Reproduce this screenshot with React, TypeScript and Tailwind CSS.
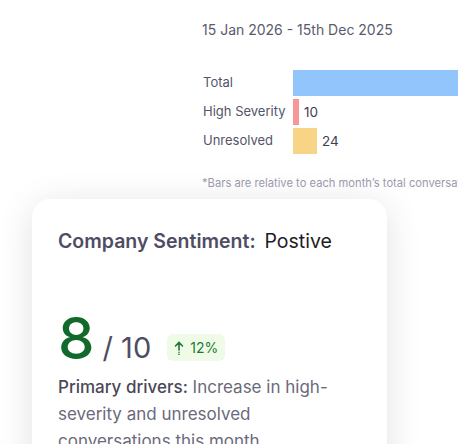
export default function App() {
  return (
    <div className="relative h-[444px] w-[458px] overflow-hidden bg-white font-['Inter',sans-serif]">
      <section className="pl-[202px] pt-[20px]">
        <p className="text-[14px] leading-[20px] text-[#5b5a6c]">15 Jan 2026 - 15th Dec 2025</p>

        <div className="mt-[30px] flex flex-col gap-[3px]">
          <BarRow label="Total" width={200} color="bg-[#93c5fd]" />
          <BarRow label="High Severity" width={6} color="bg-[#f79797]" value="10" />
          <BarRow label="Unresolved" width={24} color="bg-[#f8d486]" value="24" />
        </div>

        <p className="mt-[22px] whitespace-nowrap text-[11.2px] leading-[14px] text-[#9c99ac]">
          *Bars are relative to each month’s total conversations
        </p>
      </section>

      <div className="ml-[32px] mt-[9px] w-[355px] rounded-[18px] bg-white px-[26px] pb-10 pt-[30px] shadow-[0_6px_36px_rgba(0,0,0,0.12)]">
        <h3 className="text-[19.5px] leading-[24px] font-semibold text-[#4f4d63]">
          Company Sentiment: <span className="ml-1 font-normal text-[#1d1c26]">Postive</span>
        </h3>

        <div className="mt-[56px] flex items-end gap-2">
          <span className="text-[58px] leading-[58px] font-medium text-[#11692b]">8</span>
          <span className="mb-[3px] text-[29px] leading-[32px] text-[#4f4d63]">/ 10</span>
          <span className="mb-[6px] ml-2 flex items-center gap-1.5 rounded-md bg-[#effbe7] px-[7px] py-[5px] text-[14px] leading-[17px] text-[#1c7a38]">
            <svg width="10" height="14" viewBox="0 0 10 14" fill="none" stroke="currentColor" strokeWidth="1.6" strokeLinecap="round">
              <path d="M5 9V1.5M1.5 5L5 1.5L8.5 5" />
              <path d="M5 11.2v.1M5 13.2v.1" />
            </svg>
            12%
          </span>
        </div>

        <p className="mt-[7px] w-[290px] text-[17px] leading-[27px] text-[#6b6a7a]">
          <span className="font-medium text-[#4a4858]">Primary drivers:</span> Increase in high-severity and unresolved conversations this month.
        </p>
      </div>
    </div>
  );
}

function BarRow({ label, width, color, value }: { label: string; width: number; color: string; value?: string }) {
  return (
    <div className="flex h-[26px] items-center">
      <span className="w-[91px] shrink-0 pl-px text-[13px] text-[#55546a]">{label}</span>
      <div className={`h-full shrink-0 ${color}`} style={{ width }} />
      {value && <span className="ml-[5px] text-[13.5px] text-[#3f3e50]">{value}</span>}
    </div>
  );
}
